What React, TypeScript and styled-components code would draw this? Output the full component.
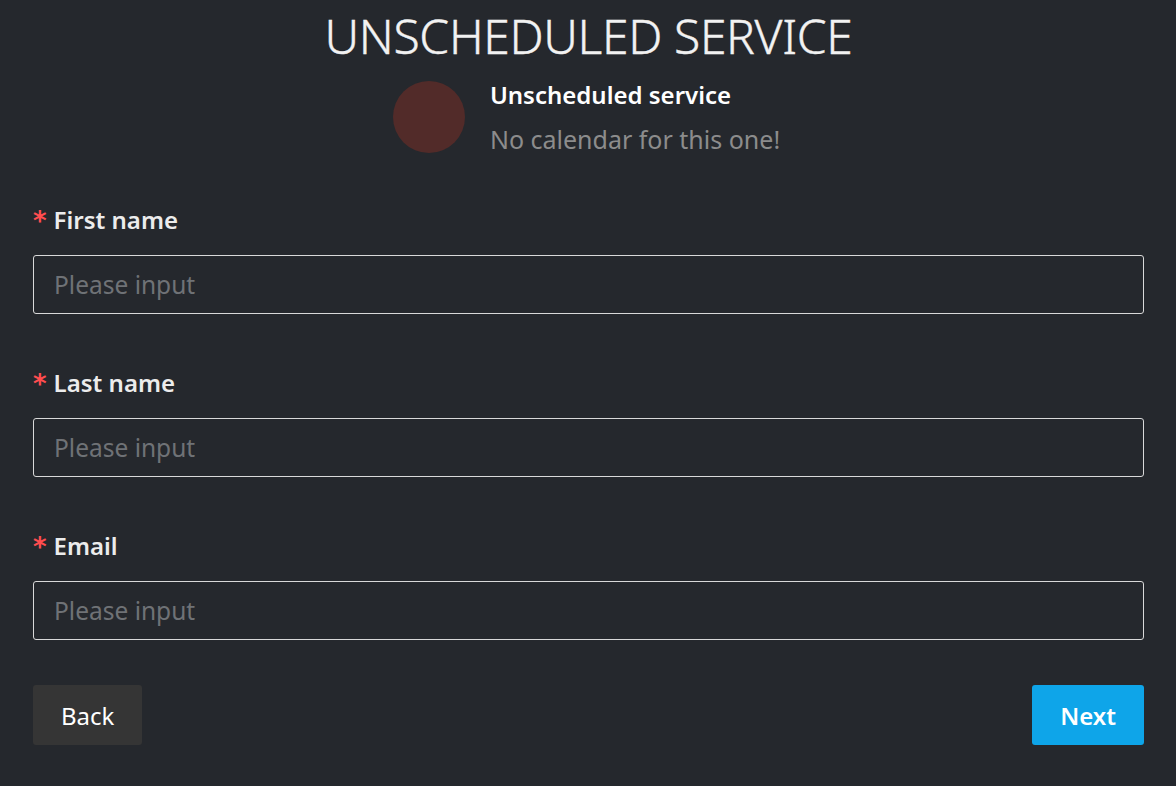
import React from "react";
import styled, { createGlobalStyle } from "styled-components";

const Global = createGlobalStyle`
  html, body { margin: 0; padding: 0; background: #25282d; }
  body { font-family: "Noto Sans", "Open Sans", sans-serif; color: #e8e8e8; }
  * { box-sizing: border-box; }
`;

const Page = styled.div`
  width: 1176px;
  min-height: 786px;
  padding: 0 32px 0 33px;
  display: flex;
  flex-direction: column;
`;

const Title = styled.h1`
  margin: 0;
  text-align: center;
  font-size: 48px;
  font-weight: 300;
  line-height: 72px;
  color: #f2f2f2;
  letter-spacing: -0.35px;
  -webkit-text-stroke: 0.4px #f2f2f2;
`;

const Service = styled.div`
  display: flex;
  justify-content: center;
  align-items: center;
  gap: 25px;
`;

const Avatar = styled.div`
  width: 72px;
  height: 72px;
  border-radius: 50%;
  background: #522b29;
  margin-left: -4px;
`;

const ServiceText = styled.div`
  display: flex;
  flex-direction: column;
`;

const ServiceName = styled.div`
  font-size: 24px;
  font-weight: 600;
  color: #ffffff;
  line-height: 45px;
`;

const ServiceDesc = styled.div`
  font-size: 25px;
  color: #8c8c8c;
  line-height: 45px;
`;

const Form = styled.form`
  margin-top: 43px;
  display: flex;
  flex-direction: column;
  gap: 54px;
`;

const Field = styled.div`
  display: flex;
  flex-direction: column;
  gap: 20px;
`;

const Label = styled.label`
  font-size: 24px;
  font-weight: 600;
  color: #ececec;
  line-height: 30px;
  display: flex;
  align-items: center;
  gap: 7px;
`;

const Star = styled.span`
  color: #ff4d4f;
  font-size: 26px;
  font-weight: 700;
  font-family: "DejaVu Sans", sans-serif;
  line-height: 1;
  margin-top: 2px;
`;

const Input = styled.input`
  height: 59px;
  width: 100%;
  background: transparent;
  border: 1px solid #d9d9d9;
  border-radius: 3px;
  padding: 0 20px;
  font-family: inherit;
  font-size: 24.5px;
  color: #eee;
  outline: none;
  &::placeholder { color: #6f7276; }
`;

const Actions = styled.div`
  margin-top: 45px;
  display: flex;
  justify-content: space-between;
`;

const Button = styled.button<{ $primary?: boolean }>`
  height: 60px;
  padding: 0 28px;
  border: none;
  border-radius: 3px;
  font-family: inherit;
  font-size: 24px;
  font-weight: ${(p) => (p.$primary ? 600 : 400)};
  color: #ffffff;
  background: ${(p) => (p.$primary ? "#0ea5e9" : "#353535")};
  cursor: pointer;
`;

export default function App() {
  return (
    <Page>
      <Global />
      <Title>UNSCHEDULED SERVICE</Title>
      <Service>
        <Avatar />
        <ServiceText>
          <ServiceName>Unscheduled service</ServiceName>
          <ServiceDesc>No calendar for this one!</ServiceDesc>
        </ServiceText>
      </Service>
      <Form>
        {["First name", "Last name", "Email"].map((l) => (
          <Field key={l}>
            <Label>
              <Star>*</Star>
              {l}
            </Label>
            <Input placeholder="Please input" />
          </Field>
        ))}
      </Form>
      <Actions>
        <Button type="button">Back</Button>
        <Button type="button" $primary>Next</Button>
      </Actions>
    </Page>
  );
}
